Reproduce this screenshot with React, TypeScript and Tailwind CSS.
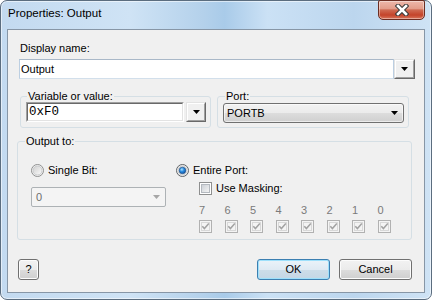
import React from "react";

function Tri({ color = "#000" }: { color?: string }) {
  return (
    <svg width="7" height="4" viewBox="0 0 7 4">
      <path d="M0 0 H7 L3.5 4 Z" fill={color} />
    </svg>
  );
}

function ClassicDrop({ className }: { className: string }) {
  return (
    <div className={`flex border border-t-[#e3e3e3] border-l-[#e3e3e3] border-r-[#696969] border-b-[#696969] ${className}`}>
      <div className="flex-1 flex items-center justify-center border border-t-white border-l-white border-r-[#a0a0a0] border-b-[#a0a0a0] bg-[#f0f0f0]">
        <Tri />
      </div>
    </div>
  );
}

function Radio({ checked }: { checked?: boolean }) {
  const id = checked ? "rb1" : "rb0";
  return (
    <svg width="13" height="13" viewBox="0 0 13 13" className="shrink-0">
      <defs>
        <linearGradient id={id + "g"} x1="0" y1="0" x2="1" y2="1">
          <stop offset="0" stopColor="#cfcfcf" />
          <stop offset="1" stopColor="#fbfbfb" />
        </linearGradient>
        <radialGradient id={id + "b"} cx="0.4" cy="0.35" r="0.7">
          <stop offset="0" stopColor="#aee3ff" />
          <stop offset="0.45" stopColor="#2b8ce0" />
          <stop offset="1" stopColor="#0c4d9c" />
        </radialGradient>
      </defs>
      <circle cx="6.5" cy="6.5" r="6" fill="#f4f4f4" stroke={checked ? "#5f6366" : "#8e8f8f"} />
      <circle cx="6.5" cy="6.5" r="4.5" fill={`url(#${id}g)`} stroke="#c9cbcd" strokeWidth="1" />
      {checked && <circle cx="6.5" cy="6.5" r="3.3" fill={`url(#${id}b)`} stroke="#1f4f86" strokeWidth="0.6" />}
    </svg>
  );
}

function Check({ checked, disabled }: { checked?: boolean; disabled?: boolean }) {
  return (
    <svg width="13" height="13" viewBox="0 0 13 13" className="shrink-0 block">
      <defs>
        <linearGradient id="cbg" x1="0" y1="0" x2="1" y2="1">
          <stop offset="0" stopColor="#cbcfd5" />
          <stop offset="1" stopColor="#f6f6f6" />
        </linearGradient>
      </defs>
      <rect x="0.5" y="0.5" width="12" height="12" fill={disabled ? "#f4f4f4" : "#fff"} stroke={disabled ? "#b1b1b1" : "#8e8f8f"} />
      <rect x="2.5" y="2.5" width="8" height="8" fill={disabled ? "#f4f4f4" : "url(#cbg)"} stroke={disabled ? "#d8d8d8" : "#b4b9bf"} />
      {checked && (
        <path d="M3.3 6.2 L5.4 8.6 L9.8 3.6" stroke="#a2a2a2" strokeWidth="1.5" fill="none" />
      )}
    </svg>
  );
}

function CloseButton() {
  return (
    <div className="-mt-px w-[47px] h-[20px] rounded-b-[5px] rounded-t-[2px] border border-[#6b2d22] bg-[linear-gradient(180deg,#edb8ab_0%,#e39d8b_42%,#cf6a52_50%,#c4432a_78%,#d9765c_100%)] shadow-[inset_0_0_0_1px_rgba(255,255,255,0.4)] flex items-center justify-center">
      <svg width="14" height="12" viewBox="0 0 14 12">
        <path d="M3 2 L11 10 M11 2 L3 10" stroke="#3a3a3a" strokeWidth="4.6" strokeLinecap="square" />
        <path d="M3 2 L11 10 M11 2 L3 10" stroke="#ffffff" strokeWidth="2.6" strokeLinecap="square" />
      </svg>
    </div>
  );
}

const bits = ["7", "6", "5", "4", "3", "2", "1", "0"];

export default function App() {
  return (
    <div className="w-[432px] h-[300px] bg-white font-['Liberation_Sans',Arial,sans-serif] text-[11px] leading-[13px] text-black">
      <div className="h-full flex flex-col rounded-[7px] border border-[#5b6d7f] px-[6px] pb-[6px] bg-[linear-gradient(90deg,#c3daf0_0%,#cfe3f5_30%,#b4d1eb_47%,#a9cbe9_52%,#cbe1f5_62%,#bcd6ee_82%,#cfe3f5_100%)] shadow-[inset_0_0_0_1px_rgba(255,255,255,0.55)]">
        <div className="h-[28px] flex items-start justify-between">
          <div className="ml-px mt-[5px] text-[11.5px] leading-[14px] text-black">Properties: Output</div>
          <CloseButton />
        </div>
        <div className="flex-1 flex flex-col border border-[#8796a6] bg-[#f0f0f0]">
          <div className="pt-[12px] pl-[11px] flex flex-col">
            <div className="ml-px">Display name:</div>
            <div className="mt-[4px] flex">
              <div className="w-[375px] h-[20px] bg-white border border-t-[#a9b8c8] border-x-[#bccfe2] border-b-[#d2dfeb] flex items-center pl-[1px]">
                Output
              </div>
              <ClassicDrop className="w-[21px] h-[20px]" />
            </div>
          </div>

          <div className="mt-[12px] pl-[12px] flex gap-[6px]">
            <fieldset className="w-[191px] border border-[#d5dfe5] rounded-[3px] p-0 m-0">
              <legend className="ml-[6px] px-px leading-[11px]">Variable or value:</legend>
              <div className="flex pl-[5px] pr-[4px] pb-[5px] gap-[2px]">
                <div className="w-[158px] h-[20px] flex border border-t-[#a0a0a0] border-l-[#a0a0a0] border-r-white border-b-white">
                  <div className="flex-1 bg-white border border-t-[#696969] border-l-[#696969] border-r-[#e3e3e3] border-b-[#e3e3e3] flex items-center pl-[1px] font-['Liberation_Mono',monospace] text-[12.5px]">
                    0xF0
                  </div>
                </div>
                <ClassicDrop className="w-[20px] h-[20px]" />
              </div>
            </fieldset>
            <fieldset className="w-[192px] border border-[#d5dfe5] rounded-[3px] p-0 m-0">
              <legend className="ml-[7px] px-px leading-[11px]">Port:</legend>
              <div className="pl-[5px] pr-[4px] pt-px pb-[4px]">
                <div className="w-[181px] h-[20px] rounded-[3px] border border-[#707070] bg-[linear-gradient(180deg,#f2f2f2_0%,#ebebeb_50%,#dddddd_50%,#cfcfcf_100%)] shadow-[inset_0_0_0_1px_rgba(255,255,255,0.6)] flex items-center justify-between pl-[3px] pr-[5px]">
                  <span>PORTB</span>
                  <Tri />
                </div>
              </div>
            </fieldset>
          </div>

          <fieldset className="mt-[8px] ml-[9px] mr-[12px] border border-[#d5dfe5] rounded-[3px] p-0">
            <legend className="ml-[7px] px-px leading-[11px]">Output to:</legend>
            <div className="flex pl-[13px] pt-[17px] pb-[6px]">
              <div className="w-[145px] flex flex-col">
                <div className="flex items-center gap-[4px] h-[13px]">
                  <Radio />
                  <span>Single Bit:</span>
                </div>
                <div className="mt-[10px] w-[135px] h-[20px] rounded-[2px] border border-[#adb2b5] bg-[#f4f4f4] flex items-center justify-between pl-[4px] pr-[5px] text-[#6d6d6d]">
                  <span>0</span>
                  <Tri color="#a6a6a6" />
                </div>
              </div>
              <div className="flex flex-col">
                <div className="flex items-center gap-[4px] h-[13px]">
                  <Radio checked />
                  <span>Entire Port:</span>
                </div>
                <div className="mt-[5px] ml-[23px] flex items-center gap-[4px] h-[13px]">
                  <Check />
                  <span>Use Masking:</span>
                </div>
                <div className="mt-[9px] ml-[23px] grid grid-cols-[repeat(8,25.5px)]">
                  {bits.map((b) => (
                    <div key={b} className="flex flex-col">
                      <span className="text-[#7a7a7a] h-[13px]">{b}</span>
                      <div className="mt-[3px]">
                        <Check checked disabled />
                      </div>
                    </div>
                  ))}
                </div>
              </div>
            </div>
          </fieldset>

          <div className="mt-[19px] pl-[10px] pr-[12px] flex items-center">
            <div className="w-[21px] h-[21px] rounded-[3px] border border-[#707070] bg-[linear-gradient(180deg,#f2f2f2_0%,#ebebeb_50%,#dddddd_50%,#cfcfcf_100%)] shadow-[inset_0_0_0_1px_#fcfcfc] flex items-center justify-center">
              ?
            </div>
            <div className="flex-1" />
            <div className="w-[73px] h-[21px] rounded-[3px] border border-[#3c7fb1] bg-[linear-gradient(180deg,#eaf3f9_0%,#dfeaf3_50%,#cddde9_50%,#c4d7e5_100%)] shadow-[inset_0_0_0_1px_#9ee0fb] flex items-center justify-center">
              OK
            </div>
            <div className="ml-[9px] w-[73px] h-[21px] rounded-[3px] border border-[#707070] bg-[linear-gradient(180deg,#f2f2f2_0%,#ebebeb_50%,#dddddd_50%,#cfcfcf_100%)] shadow-[inset_0_0_0_1px_#fcfcfc] flex items-center justify-center">
              Cancel
            </div>
          </div>
        </div>
      </div>
    </div>
  );
}
